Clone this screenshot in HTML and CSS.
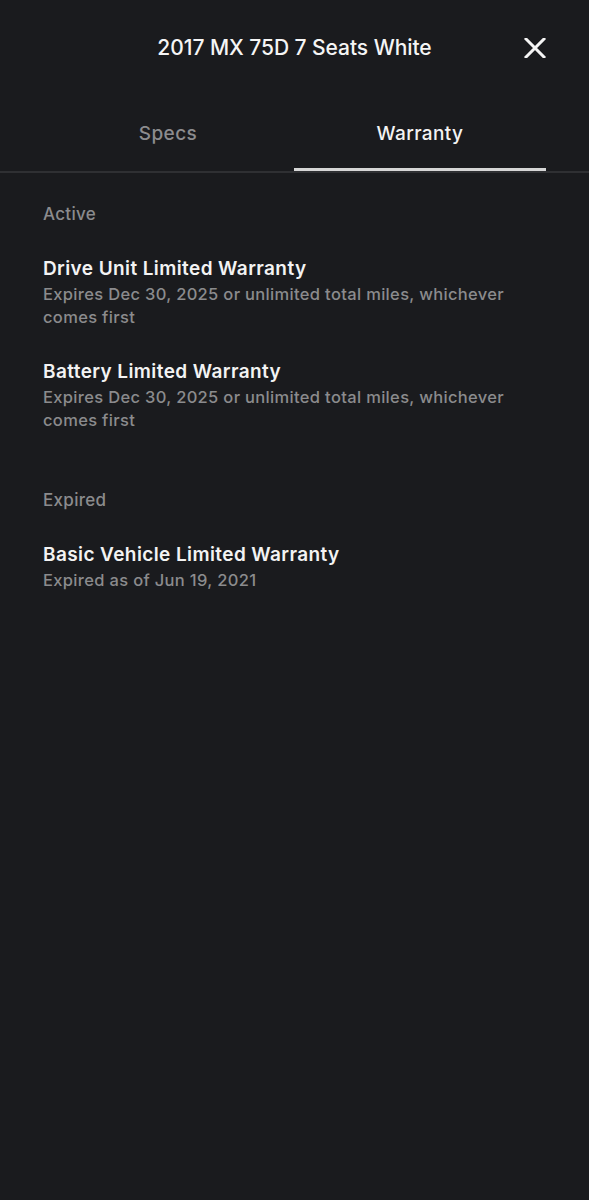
FILE: index.html
```html
<!DOCTYPE html>
<html lang="en">
<head>
<meta charset="utf-8">
<title>2017 MX 75D 7 Seats White</title>
<link rel="stylesheet" href="styles.css">
</head>
<body>
<div class="screen">
  <header class="header">
    <div class="header-side"></div>
    <h1 class="header-title">2017 MX 75D 7 Seats White</h1>
    <div class="header-side header-right">
      <button class="close-btn" aria-label="Close">
        <svg width="22" height="20" viewBox="0 0 22 20" aria-hidden="true">
          <path d="M2 1 L20 19 M20 1 L2 19" stroke="#f5f5f5" stroke-width="3" stroke-linecap="square" fill="none"/>
        </svg>
      </button>
    </div>
  </header>

  <nav class="tabs">
    <div class="tab">Specs</div>
    <div class="tab tab-active">Warranty</div>
  </nav>

  <main class="content">
    <section class="section">
      <h2 class="section-label">Active</h2>
      <div class="items">
        <div class="item">
          <div class="item-title">Drive Unit Limited Warranty</div>
          <div class="item-sub">Expires Dec 30, 2025 or unlimited total miles, whichever comes first</div>
        </div>
        <div class="item">
          <div class="item-title">Battery Limited Warranty</div>
          <div class="item-sub">Expires Dec 30, 2025 or unlimited total miles, whichever comes first</div>
        </div>
      </div>
    </section>
    <section class="section section-expired">
      <h2 class="section-label">Expired</h2>
      <div class="items">
        <div class="item">
          <div class="item-title">Basic Vehicle Limited Warranty</div>
          <div class="item-sub">Expired as of Jun 19, 2021</div>
        </div>
      </div>
    </section>
  </main>
</div>
</body>
</html>
```

FILE: styles.css
```css
* { box-sizing: border-box; }
html, body {
  margin: 0;
  padding: 0;
  background: #1a1b1e;
}
body {
  font-family: Inter, "Noto Sans", "Liberation Sans", sans-serif;
  color: #f3f3f3;
  -webkit-font-smoothing: antialiased;
}
.screen {
  width: 589px;
  min-height: 1200px;
  background: #1a1b1e;
}
.header {
  height: 95px;
  display: grid;
  grid-template-columns: 1fr auto 1fr;
  align-items: center;
}
.header-title {
  margin: 0;
  font-size: 21px;
  font-weight: 500;
  letter-spacing: -0.05px;
  color: #f5f5f5;
  line-height: 24px;
}
.header-right {
  display: flex;
  justify-content: flex-end;
  padding-right: 43px;
}
.close-btn {
  background: none;
  border: 0;
  padding: 0;
  width: 22px;
  height: 20px;
  display: flex;
  cursor: pointer;
}
.tabs {
  display: flex;
  padding: 0 43px 0 42px;
  border-bottom: 2px solid #2f3033;
}
.tab {
  flex: 1;
  height: 76px;
  display: flex;
  align-items: center;
  justify-content: center;
  font-size: 19px;
  font-weight: 500;
  letter-spacing: 0.4px;
  color: #8c8c8e;
}
.tab-active {
  color: #f3f3f3;
  box-shadow: inset 0 -3px 0 #d6d6d6;
}
.content {
  padding: 0 43px;
}
.section {
  margin-top: 31px;
}
.section-expired {
  margin-top: 58px;
}
.section-label {
  margin: 0;
  font-size: 17px;
  font-weight: 500;
  line-height: 20px;
  letter-spacing: 0.3px;
  color: #8b8b8d;
}
.items {
  margin-top: 33px;
  display: flex;
  flex-direction: column;
  gap: 31px;
}
.item-title {
  font-size: 19px;
  font-weight: 600;
  line-height: 24px;
  letter-spacing: 0.4px;
  color: #f3f3f3;
}
.item-sub {
  margin-top: 2px;
  font-size: 16.5px;
  font-weight: 500;
  line-height: 23px;
  letter-spacing: 0.33px;
  color: #8b8b8d;
  max-width: 480px;
}
```
